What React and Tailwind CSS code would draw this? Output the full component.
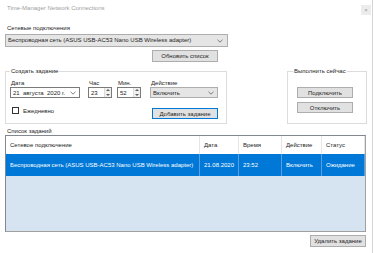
import React from 'react';

function Chevron() {
  return (
    <svg width="6" height="4" viewBox="0 0 6 4" className="shrink-0">
      <polyline points="0.5,0.8 3,3.2 5.5,0.8" fill="none" stroke="#606060" strokeWidth="0.8" />
    </svg>
  );
}

function Spinner({ value }) {
  return (
    <div className="flex h-[11px] w-[24px] border border-[#7a7a7a] bg-white">
      <div className="flex flex-1 items-center pl-[2px] leading-none">{value}</div>
      <div className="flex w-[7px] flex-col border-l border-[#dcdcdc] bg-[#f0f0f0]">
        <div className="flex flex-1 items-center justify-center">
          <svg width="4" height="2" viewBox="0 0 4 2"><polygon points="0,2 2,0 4,2" fill="#606060" /></svg>
        </div>
        <div className="flex flex-1 items-center justify-center">
          <svg width="4" height="2" viewBox="0 0 4 2"><polygon points="0,0 2,2 4,0" fill="#606060" /></svg>
        </div>
      </div>
    </div>
  );
}

function Button({ children, className = '' }) {
  return (
    <div className={`flex items-center justify-center border bg-[#e1e1e1] leading-none ${className}`}>
      {children}
    </div>
  );
}

export default function App() {
  const columns = [
    { title: 'Сетевое подключение', value: 'Беспроводная сеть (ASUS USB-AC53 Nano USB Wireless adapter)', w: 'w-[194px]' },
    { title: 'Дата', value: '21.08.2020', w: 'w-[39px]' },
    { title: 'Время', value: '23:52', w: 'w-[43px]' },
    { title: 'Действие', value: 'Включить', w: 'w-[40px]' },
    { title: 'Статус', value: 'Ожидание', w: 'flex-1' },
  ];

  return (
    <div className="relative h-[253px] w-[374px] overflow-hidden bg-white font-['Liberation_Sans',Arial,sans-serif] text-[6px] text-[#1e1e1e]">
      <div className="absolute right-[1px] top-0 h-full w-px bg-[#d4d4d4]" />
      <div className="absolute right-[3px] top-[5px] flex h-[10px] w-[10px] items-center justify-center bg-[#ececec] text-[6px] leading-none text-[#9a9a9a]">×</div>

      <div className="h-[22px] pl-[7px] pt-[5px] leading-[7px] text-[#a0a0a0]">Time-Manager Network Connections</div>

      <div className="ml-[7px] mt-[2px] h-[8px] leading-[8px]">Сетевые подключения</div>

      <div className="ml-[5px] mt-[2px] flex h-[13px] w-[223px] items-center justify-between border border-[#adadad] bg-[#e5e5e5] pl-[2px] pr-[4px]">
        <span>Беспроводная сеть (ASUS USB-AC53 Nano USB Wireless adapter)</span>
        <Chevron />
      </div>

      <Button className="ml-[152px] mt-[3px] h-[12px] w-[66px] border-[#adadad]">Обновить список</Button>

      <div className="mt-[9px] flex">
        <div className="relative ml-[5px] h-[53px] w-[222px] border border-[#dcdcdc] pl-[4px] pt-[8px]">
          <span className="absolute -top-[4px] left-[4px] bg-white px-[1px] leading-[7px]">Создать задание</span>
          <div className="flex">
            <div className="w-[70px]">
              <div className="h-[7px] pl-[1px] leading-[7px]">Дата</div>
              <div className="flex h-[11px] items-center justify-between border border-[#7a7a7a] bg-white pl-[2px] pr-[3px]">
                <span className="leading-none">21 &nbsp;августа &nbsp;2020 г.</span>
                <Chevron />
              </div>
            </div>
            <div className="ml-[8px]">
              <div className="h-[7px] pl-[1px] leading-[7px]">Час</div>
              <Spinner value="23" />
            </div>
            <div className="ml-[5px]">
              <div className="h-[7px] pl-[1px] leading-[7px]">Мин.</div>
              <Spinner value="52" />
            </div>
            <div className="ml-[9px] w-[68px]">
              <div className="h-[7px] pl-[1px] leading-[7px]">Действие</div>
              <div className="flex h-[11px] items-center justify-between border border-[#adadad] bg-[#e5e5e5] pl-[2px] pr-[3px]">
                <span className="leading-none">Включить</span>
                <Chevron />
              </div>
            </div>
          </div>
          <div className="mt-[9px] flex items-start">
            <div className="ml-[2px] flex items-center">
              <div className="h-[7px] w-[7px] border border-[#333333] bg-white" />
              <span className="ml-[4px] leading-none">Ежедневно</span>
            </div>
            <Button className="ml-auto mr-[8px] mt-[1px] h-[11px] w-[66px] border-[#0078d7]">Добавить задание</Button>
          </div>
        </div>

        <div className="relative ml-[60px] h-[53px] w-[80px] border border-[#dcdcdc] pl-[9px] pt-[15px]">
          <span className="absolute -top-[4px] left-[5px] bg-white px-[1px] leading-[7px]">Выполнить сейчас</span>
          <Button className="h-[11px] w-[56px] border-[#adadad]">Подключить</Button>
          <Button className="mt-[4px] h-[11px] w-[56px] border-[#adadad]">Отключить</Button>
        </div>
      </div>

      <div className="ml-[7px] mt-[3px] h-[8px] leading-[8px]">Список заданий</div>

      <div className="ml-[5px] flex h-[97px] w-[361px] flex-col border border-[#828790] border-b-[#a0a0a0] border-r-[#a0a0a0] bg-[#d6e4f2]">
        <div className="flex h-[18px] bg-white">
          {columns.map((c) => (
            <div key={c.title} className={`flex items-center border-r border-[#e5e5e5] pl-[4px] ${c.w}`}>
              {c.title}
            </div>
          ))}
        </div>
        <div className="flex h-[22px] bg-[#0078d7] text-white">
          {columns.map((c) => (
            <div key={c.title} className={`flex items-center border-r border-[#5aa0e0] pl-[4px] whitespace-nowrap ${c.w}`}>
              {c.value}
            </div>
          ))}
        </div>
      </div>

      <Button className="ml-[310px] mt-[3px] h-[12px] w-[56px] border-[#adadad]">Удалить задание</Button>
    </div>
  );
}
